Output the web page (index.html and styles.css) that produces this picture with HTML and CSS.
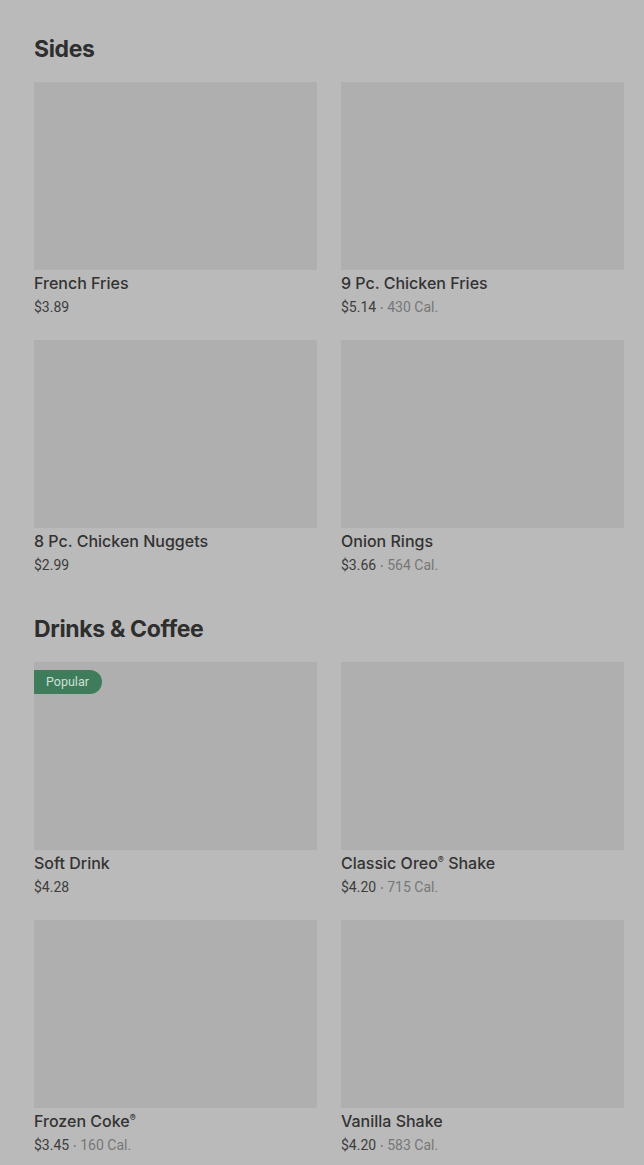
FILE: index.html
```html
<!DOCTYPE html>
<html>
<head>
<meta charset="utf-8">
<link rel="stylesheet" href="styles.css">
</head>
<body>
<main class="page">
  <section class="menu-section">
    <h2 class="section-title">Sides</h2>
    <div class="grid">
      <div class="card">
        <div class="thumb"></div>
        <div class="name">French Fries</div>
        <div class="meta"><span class="price">$3.89</span></div>
      </div>
      <div class="card">
        <div class="thumb"></div>
        <div class="name">9 Pc. Chicken Fries</div>
        <div class="meta"><span class="price">$5.14</span><span class="dot">•</span><span class="cal">430 Cal.</span></div>
      </div>
      <div class="card">
        <div class="thumb"></div>
        <div class="name">8 Pc. Chicken Nuggets</div>
        <div class="meta"><span class="price">$2.99</span></div>
      </div>
      <div class="card">
        <div class="thumb"></div>
        <div class="name">Onion Rings</div>
        <div class="meta"><span class="price">$3.66</span><span class="dot">•</span><span class="cal">564 Cal.</span></div>
      </div>
    </div>
  </section>
  <section class="menu-section">
    <h2 class="section-title">Drinks &amp; Coffee</h2>
    <div class="grid">
      <div class="card">
        <div class="thumb"><span class="badge">Popular</span></div>
        <div class="name">Soft Drink</div>
        <div class="meta"><span class="price">$4.28</span></div>
      </div>
      <div class="card">
        <div class="thumb"></div>
        <div class="name">Classic Oreo<span class="reg">®</span> Shake</div>
        <div class="meta"><span class="price">$4.20</span><span class="dot">•</span><span class="cal">715 Cal.</span></div>
      </div>
      <div class="card">
        <div class="thumb"></div>
        <div class="name">Frozen Coke<span class="reg">®</span></div>
        <div class="meta"><span class="price">$3.45</span><span class="dot">•</span><span class="cal">160 Cal.</span></div>
      </div>
      <div class="card">
        <div class="thumb"></div>
        <div class="name">Vanilla Shake</div>
        <div class="meta"><span class="price">$4.20</span><span class="dot">•</span><span class="cal">583 Cal.</span></div>
      </div>
    </div>
  </section>
</main>
</body>
</html>
```
FILE: styles.css
```css
html, body {
  margin: 0;
  padding: 0;
  background: #bababa;
}
body {
  font-family: "Inter", "Roboto", "Liberation Sans", sans-serif;
  color: #2f2f2f;
}
.page {
  padding: 33px 20px 0 34px;
}
.menu-section {
  margin-bottom: 38px;
}
.section-title {
  margin: 0 0 17px;
  font-size: 23px;
  line-height: 32px;
  font-weight: 700;
  letter-spacing: -0.35px;
  color: #2e2e2e;
}
.grid {
  display: grid;
  grid-template-columns: 283px 283px;
  column-gap: 24px;
  row-gap: 23px;
}
.thumb {
  position: relative;
  height: 188px;
  background: #afafaf;
}
.badge {
  position: absolute;
  left: 0;
  top: 8px;
  height: 24px;
  line-height: 24px;
  padding: 0 13px 0 12px;
  background: #3e7c5b;
  color: #cfe0d5;
  font-family: "Roboto", sans-serif;
  font-size: 12.5px;
  border-radius: 0 12px 12px 0;
}
.name {
  margin-top: 1px;
  height: 24px;
  font-family: "Inter", "Roboto", sans-serif;
  font-size: 16px;
  line-height: 24px;
  font-weight: 500;
  color: #333;
}
.reg {
  font-size: 9px;
  line-height: 0;
  vertical-align: 6px;
}
.meta {
  margin-top: 2px;
  height: 20px;
  font-family: "Roboto", "Inter", sans-serif;
  font-size: 14px;
  line-height: 20px;
  color: #3d3d3d;
}
.dot {
  margin: 0 4px;
  font-size: 9px;
  line-height: 0;
  color: #777;
  vertical-align: 1px;
}
.cal {
  color: #777;
}
```
